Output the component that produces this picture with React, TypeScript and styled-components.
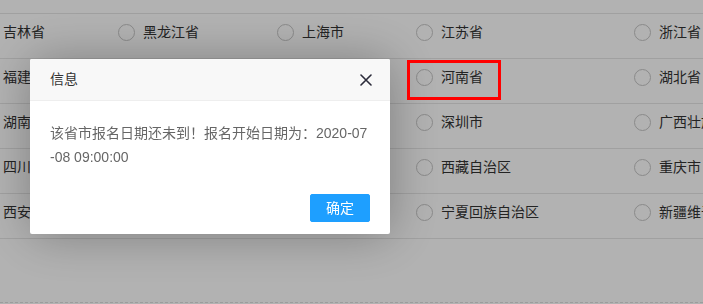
import React from "react";
import styled, { createGlobalStyle } from "styled-components";

const rows: string[][] = [
  ["吉林省", "黑龙江省", "上海市", "江苏省", "浙江省"],
  ["福建省", "安徽省", "江西省", "河南省", "湖北省"],
  ["湖南省", "广东省", "海南省", "深圳市", "广西壮族自治区"],
  ["四川省", "贵州省", "云南省", "西藏自治区", "重庆市"],
  ["西安市", "甘肃省", "青海省", "宁夏回族自治区", "新疆维吾尔自治区"],
];

const GlobalStyle = createGlobalStyle`
  html, body {
    margin: 0;
    padding: 0;
    width: 703px;
    height: 304px;
    overflow: hidden;
    background: #fff;
    font-family: "Liberation Sans", "Noto Sans CJK SC", sans-serif;
    font-size: 14px;
    color: #333;
  }
`;

const Page = styled.div`
  width: 703px;
  height: 304px;
  overflow: hidden;
  padding-top: 13px;
  box-sizing: border-box;
  display: flex;
  flex-direction: column;
`;

const Table = styled.div`
  margin-left: -30px;
  border-top: 1px solid #e6e6e6;
  display: flex;
  flex-direction: column;
`;

const Row = styled.div`
  display: grid;
  grid-template-columns: 140px 159px 139px 218px 300px;
  height: 44px;
  border-bottom: 1px solid #e6e6e6;
`;

const Cell = styled.label`
  display: flex;
  align-items: center;
  gap: 8px;
  padding: 0 0 8px 8px;
  white-space: nowrap;
  line-height: 18px;
  color: #333;
`;

const Radio = styled.span`
  width: 17px;
  height: 17px;
  box-sizing: border-box;
  border-radius: 50%;
  border: 1px solid #c6c6c6;
  flex: none;
`;

const Footer = styled.div`
  margin-top: auto;
  margin-bottom: 1px;
  border-top: 1px dashed #e0e0e0;
`;

const Shade = styled.div`
  position: fixed;
  inset: 0;
  background: rgba(0, 0, 0, 0.3);
`;

const Dialog = styled.div`
  position: fixed;
  left: 30px;
  top: 59px;
  width: 360px;
  background: #fff;
  border-radius: 2px;
  box-shadow: 1px 1px 50px rgba(0, 0, 0, 0.3);
`;

const Title = styled.div`
  position: relative;
  height: 41px;
  line-height: 41px;
  padding: 0 80px 0 20px;
  background: #f8f8f8;
  border-bottom: 1px solid #eee;
  border-radius: 2px 2px 0 0;
  color: #333;
  font-size: 14px;
`;

const Close = styled.span`
  position: absolute;
  right: 18px;
  top: 15px;
  width: 12px;
  height: 12px;
  display: flex;
  cursor: pointer;
`;

const Content = styled.div`
  padding: 20px;
  line-height: 24px;
  font-size: 14px;
  color: #666;
  word-break: break-all;
`;

const Buttons = styled.div`
  display: flex;
  justify-content: flex-end;
  padding: 0 15px 12px;
`;

const Button = styled.a`
  box-sizing: border-box;
  height: 28px;
  line-height: 26px;
  margin: 5px 5px 0;
  padding: 0 15px;
  border: 1px solid #1e9fff;
  background: #1e9fff;
  color: #fff;
  border-radius: 2px;
  font-size: 14px;
  cursor: pointer;
`;

const Highlight = styled.div`
  position: fixed;
  left: 407px;
  top: 60px;
  width: 94px;
  height: 40px;
  box-sizing: border-box;
  border: 3px solid #ff0000;
`;

const App = () => {
  return (
    <>
      <GlobalStyle />
      <Page>
        <Table>
          {rows.map((row, i) => (
            <Row key={i}>
              {row.map((name) => (
                <Cell key={name}>
                  <Radio />
                  {name}
                </Cell>
              ))}
            </Row>
          ))}
        </Table>
        <Footer />
      </Page>
      <Shade />
      <Dialog>
        <Title>
          信息
          <Close>
            <svg width="12" height="12" viewBox="0 0 12 12">
              <path
                d="M1 1 L11 11 M11 1 L1 11"
                stroke="#2b2b3a"
                strokeWidth="1.6"
                strokeLinecap="round"
              />
            </svg>
          </Close>
        </Title>
        <Content>该省市报名日期还未到！报名开始日期为：2020-07-08 09:00:00</Content>
        <Buttons>
          <Button>确定</Button>
        </Buttons>
      </Dialog>
      <Highlight />
    </>
  );
};

export default App;
